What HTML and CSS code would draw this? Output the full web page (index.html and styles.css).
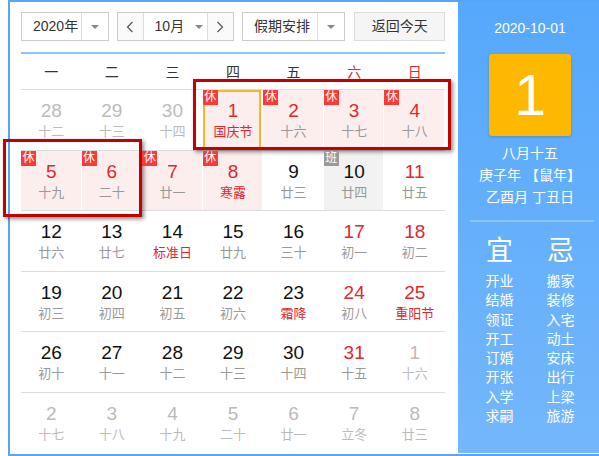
FILE: index.html
```html
<!DOCTYPE html>
<html lang="zh-CN">
<head>
<meta charset="utf-8">
<title>万年历</title>
<link rel="stylesheet" href="styles.css">
</head>
<body>
<div class="cal">
  <div class="main">
    <div class="toolbar">
      <div class="sel year"><span class="sel-text">2020年</span><span class="sel-arrow"><i class="tri"></i></span></div>
      <div class="month">
        <span class="nav"><svg width="8" height="12" viewBox="0 0 8 12"><polyline points="6.5,1 1.5,6 6.5,11" fill="none" stroke="#555" stroke-width="1.2"/></svg></span>
        <span class="month-text">10月<i class="tri"></i></span>
        <span class="nav"><svg width="8" height="12" viewBox="0 0 8 12"><polyline points="1.5,1 6.5,6 1.5,11" fill="none" stroke="#555" stroke-width="1.2"/></svg></span>
      </div>
      <div class="sel holiday"><span class="sel-text">假期安排</span><span class="sel-arrow"><i class="tri"></i></span></div>
      <div class="btn">返回今天</div>
    </div>
    <div class="week">
      <span>一</span><span>二</span><span>三</span><span>四</span><span>五</span><span class="red">六</span><span class="red">日</span>
    </div>
    <div class="grid">
      <div class="d o"><b>28</b><em>十二</em></div>
      <div class="d o"><b>29</b><em>十三</em></div>
      <div class="d o"><b>30</b><em>十四</em></div>
      <div class="d rest r f cur"><i class="tag">休</i><b>1</b><em>国庆节</em></div>
      <div class="d rest r"><i class="tag">休</i><b>2</b><em>十六</em></div>
      <div class="d rest r"><i class="tag">休</i><b>3</b><em>十七</em></div>
      <div class="d rest r"><i class="tag">休</i><b>4</b><em>十八</em></div>

      <div class="d rest r"><i class="tag">休</i><b>5</b><em>十九</em></div>
      <div class="d rest r"><i class="tag">休</i><b>6</b><em>二十</em></div>
      <div class="d rest r"><i class="tag">休</i><b>7</b><em>廿一</em></div>
      <div class="d rest r f"><i class="tag">休</i><b>8</b><em>寒露</em></div>
      <div class="d"><b>9</b><em>廿三</em></div>
      <div class="d work"><i class="tag ban">班</i><b>10</b><em>廿四</em></div>
      <div class="d r"><b>11</b><em>廿五</em></div>

      <div class="d"><b>12</b><em>廿六</em></div>
      <div class="d"><b>13</b><em>廿七</em></div>
      <div class="d f"><b>14</b><em>标准日</em></div>
      <div class="d"><b>15</b><em>廿九</em></div>
      <div class="d"><b>16</b><em>三十</em></div>
      <div class="d r"><b>17</b><em>初一</em></div>
      <div class="d r"><b>18</b><em>初二</em></div>

      <div class="d"><b>19</b><em>初三</em></div>
      <div class="d"><b>20</b><em>初四</em></div>
      <div class="d"><b>21</b><em>初五</em></div>
      <div class="d"><b>22</b><em>初六</em></div>
      <div class="d f"><b>23</b><em>霜降</em></div>
      <div class="d r"><b>24</b><em>初八</em></div>
      <div class="d r f"><b>25</b><em>重阳节</em></div>

      <div class="d"><b>26</b><em>初十</em></div>
      <div class="d"><b>27</b><em>十一</em></div>
      <div class="d"><b>28</b><em>十二</em></div>
      <div class="d"><b>29</b><em>十三</em></div>
      <div class="d"><b>30</b><em>十四</em></div>
      <div class="d r"><b>31</b><em>十五</em></div>
      <div class="d o"><b>1</b><em>十六</em></div>

      <div class="d o"><b>2</b><em>十七</em></div>
      <div class="d o"><b>3</b><em>十八</em></div>
      <div class="d o"><b>4</b><em>十九</em></div>
      <div class="d o"><b>5</b><em>二十</em></div>
      <div class="d o"><b>6</b><em>廿一</em></div>
      <div class="d o"><b>7</b><em>立冬</em></div>
      <div class="d o"><b>8</b><em>廿三</em></div>
    </div>
  </div>
  <div class="side">
    <div class="side-date">2020-10-01</div>
    <div class="bigday">1</div>
    <div class="lunar">
      <div>八月十五</div>
      <div>庚子年 【鼠年】</div>
      <div>乙酉月 丁丑日</div>
    </div>
    <div class="sep"></div>
    <div class="yj">
      <div class="col">
        <div class="yj-head">宜</div>
        <div>开业</div><div>结婚</div><div>领证</div><div>开工</div><div>订婚</div><div>开张</div><div>入学</div><div>求嗣</div>
      </div>
      <div class="col">
        <div class="yj-head">忌</div>
        <div>搬家</div><div>装修</div><div>入宅</div><div>动土</div><div>安床</div><div>出行</div><div>上梁</div><div>旅游</div>
      </div>
    </div>
  </div>
</div>
<div class="mark mark-a"></div>
<div class="mark mark-b"></div>
</body>
</html>
```

FILE: styles.css
```css
* { box-sizing: border-box; }
html, body { margin: 0; padding: 0; }
body {
  width: 599px;
  height: 456px;
  overflow: hidden;
  position: relative;
  background: #fff;
  font-family: "Liberation Sans", "Noto Sans CJK SC", sans-serif;
  color: #333;
}
.cal {
  margin-left: 8px;
  width: 596px;
  height: 456px;
  border: 2px solid #56a6f8;
  display: flex;
}
.main {
  width: 435px;
  flex: none;
  padding: 10px 0 0 11px;
}
.toolbar {
  display: flex;
  height: 29px;
  font-size: 14px;
  color: #333;
}
.sel, .month, .btn {
  height: 29px;
  border: 1px solid #ccc;
  background: #fff;
  display: flex;
  align-items: stretch;
}
.sel-text {
  flex: 1;
  line-height: 27px;
  padding-left: 11px;
}
.sel-arrow {
  border-left: 1px solid #ddd;
  width: 27px;
  display: flex;
  align-items: center;
  justify-content: center;
}
.tri {
  display: inline-block;
  width: 0;
  height: 0;
  border-left: 4px solid transparent;
  border-right: 4px solid transparent;
  border-top: 4px solid #888;
}
.year { width: 88px; }
.month { width: 118px; margin-left: 8px; }
.holiday { width: 104px; margin-left: 8px; }
.nav {
  width: 25px;
  flex: none;
  display: flex;
  align-items: center;
  justify-content: center;
  background: #fafafa;
}
.month-text {
  flex: 1;
  border-left: 1px solid #ddd;
  border-right: 1px solid #ddd;
  line-height: 27px;
  padding-left: 11px;
  display: flex;
  align-items: center;
}
.month-text .tri { margin-left: 11px; }
.btn {
  width: 91px;
  margin-left: 9px;
  background: #f5f5f5;
  border-color: #ddd;
  justify-content: center;
  line-height: 27px;
}
.week {
  margin-top: 11px;
  border-top: 2px solid #8ec4f5;
  width: 424px;
  height: 37px;
  display: grid;
  grid-template-columns: repeat(7, 1fr);
  font-size: 14px;
  line-height: 36px;
  text-align: center;
  color: #333;
}
.week .red { color: #e0282e; }
.grid {
  width: 424px;
  display: grid;
  grid-template-columns: repeat(7, 1fr);
  grid-auto-rows: 60.6px;
}
.d {
  position: relative;
  border-top: 1px solid #dcdcdc;
  text-align: center;
  padding-top: 10px;
}
.d b {
  display: block;
  font-weight: normal;
  font-size: 19px;
  line-height: 22px;
  color: #111;
}
.d em {
  display: block;
  font-style: normal;
  font-size: 13px;
  line-height: 16px;
  margin-top: 2px;
  color: #999;
}
.d.r b { color: #e3262d; }
.d.f em { color: #e3262d; }
.d.o b, .d.o em { color: #bbb; }
.d.rest {
  background: #fdeeee;
  box-shadow: inset -1px 0 #fff;
}
.d.work {
  background: #f2f2f2;
  box-shadow: inset -1px 0 #fff;
}
.tag {
  position: absolute;
  z-index: 1;
  top: 0;
  left: 0;
  width: 15px;
  height: 15px;
  background: #fb3a36;
  color: #fff;
  font-style: normal;
  font-size: 12px;
  line-height: 15px;
  text-align: center;
}
.tag.ban { background: #999; }
.d.cur::after {
  content: "";
  position: absolute;
  top: 0;
  left: 0;
  right: 2px;
  bottom: 1px;
  border: 2px solid #f8b62a;
}
.side {
  flex: 1;
  margin-left: 13px;
  margin-bottom: 1px;
  background: linear-gradient(#56a8fc, #74b7fb);
  color: #fff;
  text-align: center;
  padding-top: 16px;
}
.side-date {
  font-size: 14px;
  line-height: 20px;
}
.bigday {
  width: 82px;
  height: 82px;
  margin: 16px auto 0;
  background: #ffb800;
  border-radius: 3px;
  box-shadow: 0 1px 3px rgba(0, 0, 0, 0.18);
  font-size: 57px;
  line-height: 82px;
  color: #fff;
}
.lunar {
  margin-top: 6px;
  font-size: 14px;
  line-height: 22px;
}
.sep {
  margin: 12px 8px 0 12px;
  height: 2px;
  background: #8cc4fc;
}
.yj {
  display: flex;
  justify-content: center;
  margin-top: 14px;
  font-size: 14px;
  line-height: 19.3px;
}
.col { width: 61px; }
.yj-head {
  font-size: 27px;
  line-height: 30px;
  margin-bottom: 6px;
}
.mark {
  position: absolute;
  border: 3px solid #c40000;
  box-shadow: 2px 2px 4px rgba(0, 0, 0, 0.45);
}
.mark-a { left: 193px; top: 79px; width: 258px; height: 71px; }
.mark-b { left: 3px; top: 139px; width: 139px; height: 78px; }
```
